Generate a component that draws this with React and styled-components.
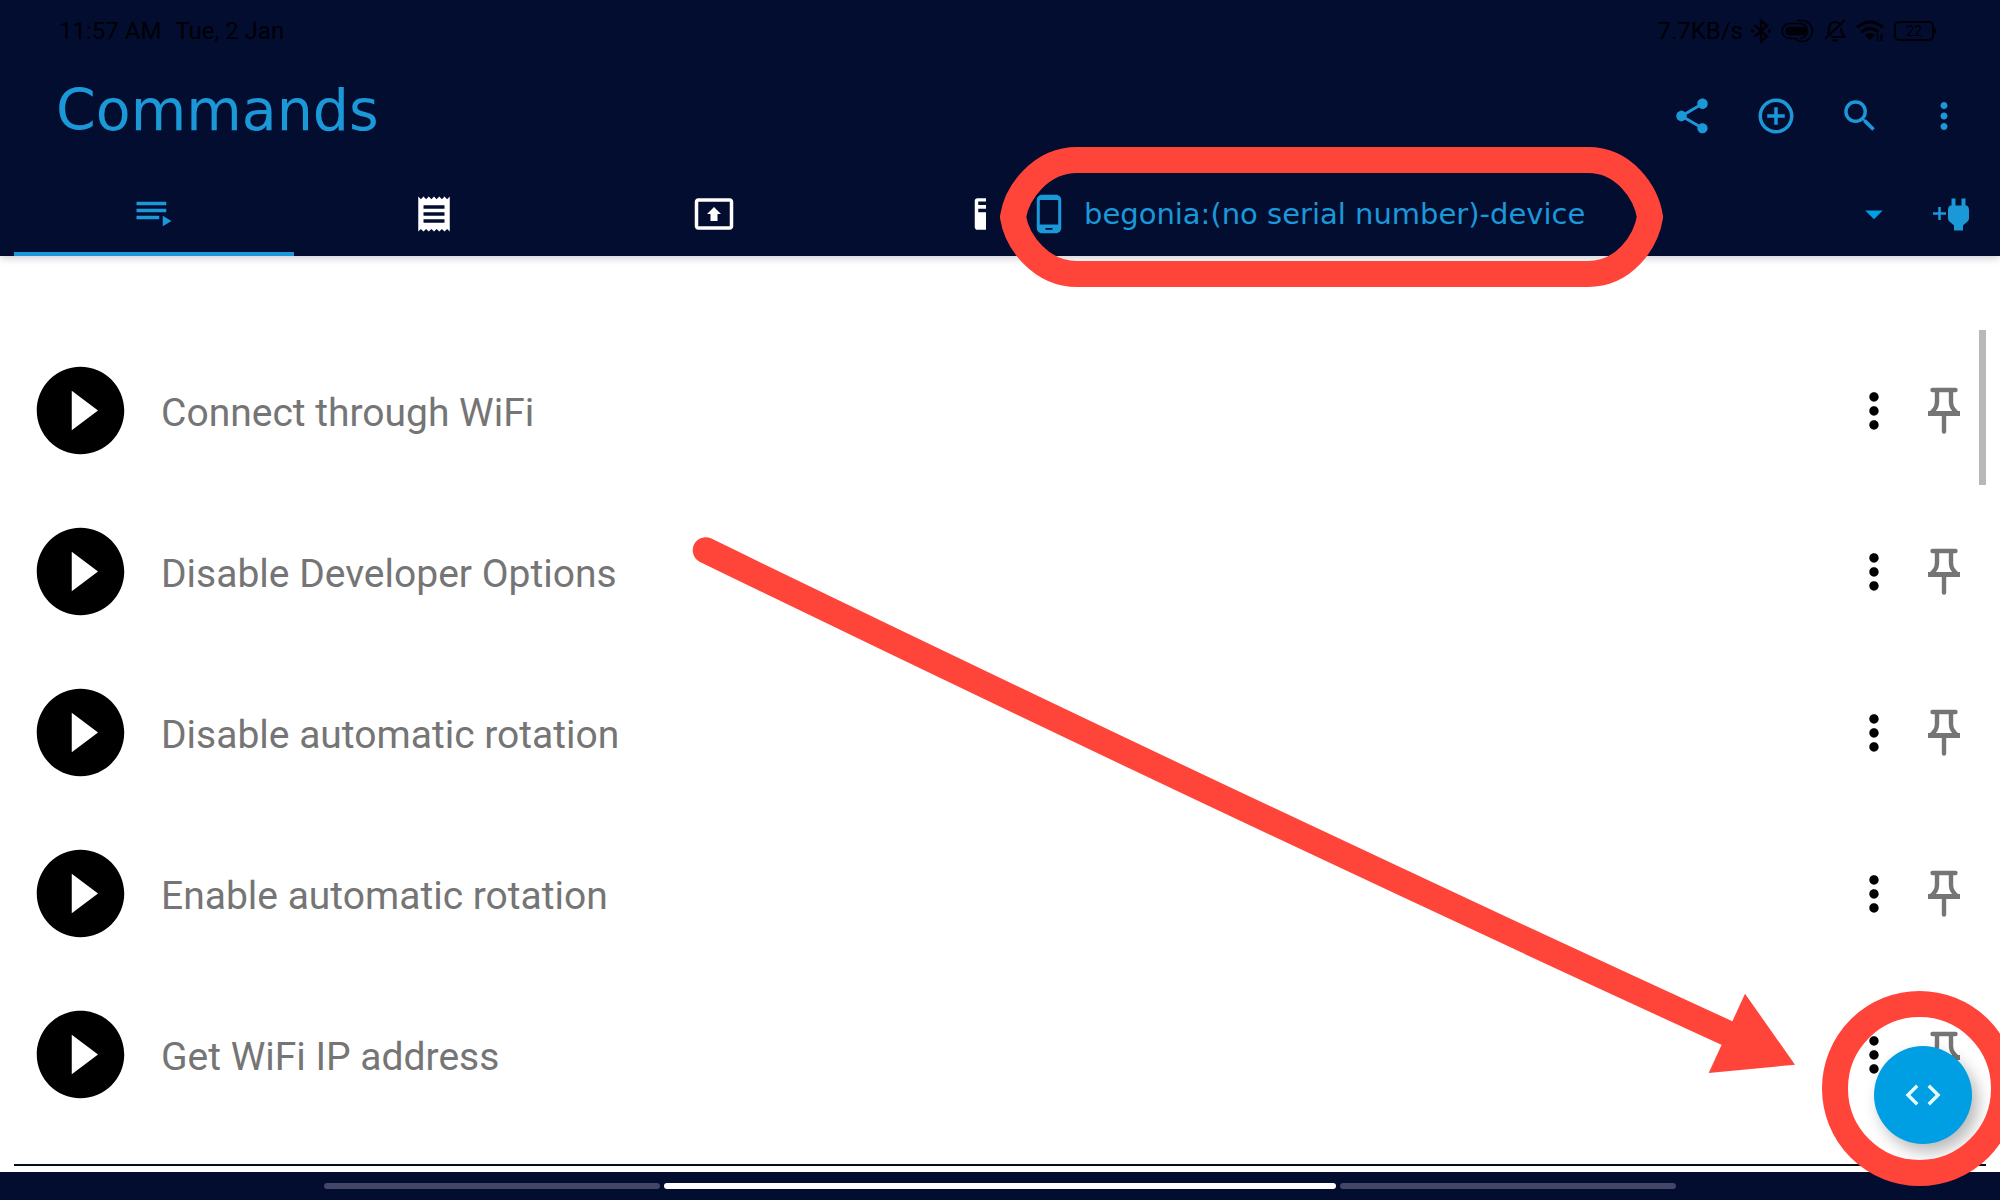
import React, { useState } from "react";
import styled, { createGlobalStyle } from "styled-components";
import {
  MdShare,
  MdAddCircleOutline,
  MdSearch,
  MdMoreVert,
  MdPhoneAndroid,
  MdArrowDropDown,
  MdPlayCircleFilled,
  MdCode,
} from "react-icons/md";

const color = {
  navy: "#030d30",
  accent: "#1b98d8",
  fab: "#009ee3",
  label: "#757575",
  marker: "#ff453a",
};

const displayFont = `"DejaVu Sans", sans-serif`;

const GlobalStyle = createGlobalStyle`
  *, *::before, *::after { box-sizing: border-box; }
  body { margin: 0; background: #fff; font-family: Roboto, sans-serif; }
  button, select { font: inherit; color: inherit; background: none; border: 0; padding: 0; margin: 0; cursor: pointer; }
  svg { display: block; flex: none; }
`;

const Screen = styled.div`
  position: relative;
  display: flex;
  flex-direction: column;
  height: 100vh;
  overflow: hidden;
`;

const Header = styled.header`
  position: relative;
  flex: none;
  background: ${color.navy};
  color: ${color.accent};
  box-shadow: 0 2px 8px rgba(2, 12, 47, 0.2);
`;

const StatusBar = styled.div`
  display: flex;
  justify-content: space-between;
  align-items: center;
  height: 60px;
  padding: 2px 66px 0 59px;
  color: #000006;
  font-size: 24px;
  line-height: 28px;
`;

const StatusGroup = styled.div`
  display: flex;
  align-items: center;
  gap: ${(p) => p.$gap}px;
`;

const StatusIcons = styled(StatusGroup)`
  margin-left: -2px;
`;

const AppBar = styled.div`
  display: flex;
  justify-content: space-between;
  height: 112px;
  padding: 0 14px 0 56px;
`;

const Title = styled.h1`
  margin: 0;
  font: 400 57px/100px ${displayFont};
`;

const Actions = styled.div`
  display: flex;
`;

const ActionButton = styled.button`
  display: grid;
  place-items: center;
  width: 84px;
`;

const TabRow = styled.div`
  display: grid;
  grid-template-columns: 1fr 1fr;
  height: 84px;
`;

const Tabs = styled.div`
  display: flex;
  margin: 0 14px;
  overflow: hidden;
`;

const Tab = styled.button`
  display: grid;
  place-items: center;
  flex: 0 0 280px;
  padding-top: 4px;
  color: ${(p) => (p.$active ? color.accent : "#fff")};
  border-bottom: 4px solid ${(p) => (p.$active ? color.accent : "transparent")};
`;

const DevicePicker = styled.div`
  position: relative;
  display: flex;
  align-items: center;
  gap: 14px;
  padding: 0 28px;
`;

const DeviceSelect = styled.select`
  flex: 1;
  min-width: 0;
  height: 56px;
  appearance: none;
  font-family: ${displayFont};
  font-size: 29px;
  outline: none;
`;

const PlugButton = styled.button`
  margin-left: 21px;
`;

const Capsule = styled.svg`
  position: absolute;
  left: 0;
  top: -26px;
  pointer-events: none;
`;

const Main = styled.main`
  position: relative;
  flex: 1;
  min-height: 0;
  display: flex;
  flex-direction: column;
  padding: 74px 0 6px;
`;

const CommandList = styled.ul`
  flex: 1;
  min-height: 0;
  overflow: hidden;
  margin: 0 14px;
  padding: 0;
  list-style: none;
  border-bottom: 2px solid #060c1e;
`;

const CommandRow = styled.li`
  display: flex;
  align-items: center;
  gap: 14px;
  height: 161px;
  padding: 0 14px;
`;

const CommandName = styled.span`
  flex: 1;
  padding: 4px 0 0 14px;
  color: ${color.label};
  font-size: 39px;
  line-height: 46px;
`;

const RowButton = styled.button`
  color: ${(p) => p.$tone || "#000"};
`;

const ScrollThumb = styled.div`
  position: absolute;
  top: 74px;
  right: 14px;
  width: 7px;
  height: 155px;
  background: #b8b8b8;
`;

const Fab = styled.button`
  position: absolute;
  right: 28px;
  bottom: 28px;
  display: grid;
  place-items: center;
  width: 98px;
  height: 98px;
  border-radius: 50%;
  background: ${color.fab};
  color: #e2fcff;
  box-shadow: 6px 8px 16px rgba(0, 0, 0, 0.28);
`;

const Ring = styled.div`
  position: absolute;
  z-index: 2;
  right: -17px;
  bottom: -14px;
  width: 195px;
  height: 195px;
  border: 26px solid ${color.marker};
  border-radius: 50%;
  pointer-events: none;
`;

const Arrow = styled.svg`
  position: absolute;
  left: 680px;
  top: 270px;
  pointer-events: none;
`;

const NavBar = styled.footer`
  display: flex;
  flex: none;
  justify-content: center;
  gap: 4px;
  height: 28px;
  padding-top: 11px;
  background: ${color.navy};
`;

const NavSegment = styled.span`
  width: ${(p) => (p.$current ? 672 : 336)}px;
  height: 6px;
  border-radius: 3px;
  background: ${(p) => (p.$current ? "#fff" : "#434666")};
`;

const QueueIcon = () => (
  <svg width="42" height="42" viewBox="0 0 24 24" fill="currentColor">
    <path d="M19 9H2v2h17V9zm0-4H2v2h17V5zM2 15h13v-2H2v2zm15-2v6l5-3-5-3z" />
  </svg>
);

const ReceiptIcon = () => (
  <svg width="42" height="42" viewBox="0 0 24 24" fill="currentColor">
    <path d="M18 17H6v-2h12v2zm0-4H6v-2h12v2zm0-4H6V7h12v2zM3 22l1.5-1.5L6 22l1.5-1.5L9 22l1.5-1.5L12 22l1.5-1.5L15 22l1.5-1.5L18 22l1.5-1.5L21 22V2l-1.500 1.500L18 2l-1.500 1.500L15 2l-1.500 1.500L12 2l-1.500 1.500L9 2 7.500 3.500 6 2 4.500 3.500 3 2v20z" />
  </svg>
);

const PresentIcon = () => (
  <svg width="42" height="42" viewBox="0 0 24 24" fill="currentColor">
    <path d="M21 3H3c-1.110 0-2 .890-2 2v14c0 1.110.890 2 2 2h18c1.110 0 2-.890 2-2V5c0-1.110-.890-2-2-2zm0 16.020H3V4.980h18v14.040zM10 12H8l4-4 4 4h-2v4h-4v-4z" />
  </svg>
);

const PackageIcon = () => (
  <svg width="42" height="42" viewBox="0 0 24 24" fill="currentColor" fillRule="evenodd">
    <path d="M2.500 3h19c.8 0 1.500.7 1.500 1.500v15c0 .8-.7 1.500-1.500 1.500h-19c-.8 0-1.500-.7-1.500-1.500v-15C1 3.700 1.700 3 2.500 3zM3 4.800v2h18v-2zM3 9v2h18V9z" />
  </svg>
);

const PlugIcon = () => (
  <svg width="42" height="42" viewBox="0 0 42 42" fill="currentColor">
    <path d="M3 20.500h13M9.500 14v13" stroke="currentColor" strokeWidth="2.500" />
    <path d="M21.500 5.500h4v7h6v-7h4v7h1.500q2 1.500 2 4v9q0 2-2 3.500l-4 3.500v5h-9v-5l-4-3.500q-2-1.500-2-3.500v-9q0-2.500 2-4h1.500z" />
  </svg>
);

const PinIcon = () => (
  <svg width="56" height="56" viewBox="0 0 56 56" fill="none" stroke="currentColor" strokeWidth="4.400">
    <path d="M16.500 7h23" strokeLinecap="round" />
    <path d="M21 7v12q0 7-7 11.500M35 7v12q0 7 7 11.500" />
    <path d="M12 30.500h32" strokeWidth="5" />
    <path d="M28 31v17.500" strokeLinecap="round" />
  </svg>
);

const BluetoothIcon = () => (
  <svg width="20" height="24" viewBox="0 0 20 24" fill="none" stroke="currentColor" strokeWidth="2.400">
    <path d="M4 6.500l12 11-6 5v-21l6 5-12 11" />
    <path d="M0 12h3M17 12h3" strokeWidth="3" />
  </svg>
);

const BudsIcon = () => (
  <svg width="33" height="24" viewBox="0 0 33 24" fill="none" stroke="currentColor" strokeWidth="1.600">
    <rect x="5" y="8.500" width="20" height="7" rx="3.500" fill="currentColor" />
    <path d="M20 4.500H8.500a7.500 7.500 0 0 0 0 15H16" />
    <path d="M16 1.500h5a10.500 10.500 0 0 1 0 21q-4 0-6-2.500" />
    <path d="M19 4.500a7.500 7.500 0 0 1 0 15" />
  </svg>
);

const MutedBellIcon = () => (
  <svg width="22" height="24" viewBox="0 0 22 24" fill="none" stroke="currentColor" strokeWidth="2">
    <path d="M4 15q1-2 1-6 1-6 6-6 3 0 4.500 2M17 9q0 5 3.500 9H7M21 1L1 20M8 21.500h6" />
  </svg>
);

const WifiIcon = () => (
  <svg width="28" height="24" viewBox="0 0 28 24" fill="none" stroke="currentColor" strokeWidth="3">
    <path d="M1 8.500q13-11 26 0M5.500 13q8.500-7 17 0" />
    <path d="M9 16q5-4 10 0l-5 5z" fill="currentColor" stroke="none" />
    <path d="M21.500 22v-7m4 0v7" strokeWidth="2" />
  </svg>
);

const Battery = styled.span`
  display: grid;
  place-items: center;
  position: relative;
  width: 40px;
  height: 20px;
  border: 2px solid currentColor;
  border-radius: 5px;
  font-size: 14px;
  line-height: 16px;

  &::after {
    content: "";
    position: absolute;
    left: 37px;
    width: 3px;
    height: 6px;
    border-radius: 0 3px 3px 0;
    background: currentColor;
  }
`;

const tabs = [
  { name: "Commands", Icon: QueueIcon },
  { name: "Logs", Icon: ReceiptIcon },
  { name: "Install", Icon: PresentIcon },
  { name: "Packages", Icon: PackageIcon },
];

const actions = [
  { name: "Share", Icon: MdShare },
  { name: "Add", Icon: MdAddCircleOutline },
  { name: "Search", Icon: MdSearch },
  { name: "More", Icon: MdMoreVert },
];

const commands = [
  "Connect through WiFi",
  "Disable Developer Options",
  "Disable automatic rotation",
  "Enable automatic rotation",
  "Get WiFi IP address",
];

export default function App() {
  const [active, setActive] = useState(0);

  return (
    <Screen>
      <GlobalStyle />
      <Header>
        <StatusBar>
          <StatusGroup $gap={14}>
            <span>11:57 AM</span>
            <span>Tue, 2 Jan</span>
          </StatusGroup>
          <StatusGroup $gap={10}>
            <span>7.7KB/s</span>
            <StatusIcons $gap={10}>
              <BluetoothIcon />
              <BudsIcon />
              <MutedBellIcon />
              <WifiIcon />
              <Battery>22</Battery>
            </StatusIcons>
          </StatusGroup>
        </StatusBar>
        <AppBar>
          <Title>Commands</Title>
          <Actions>
            {actions.map(({ name, Icon }) => (
              <ActionButton key={name} aria-label={name}>
                <Icon size={42} />
              </ActionButton>
            ))}
          </Actions>
        </AppBar>
        <TabRow>
          <Tabs role="tablist">
            {tabs.map(({ name, Icon }, i) => (
              <Tab
                key={name}
                role="tab"
                aria-label={name}
                aria-selected={i === active}
                $active={i === active}
                onClick={() => setActive(i)}
              >
                <Icon />
              </Tab>
            ))}
          </Tabs>
          <DevicePicker>
            <MdPhoneAndroid size={42} />
            <DeviceSelect aria-label="Device">
              <option>begonia:(no serial number)-device</option>
            </DeviceSelect>
            <MdArrowDropDown size={42} color={color.fab} />
            <PlugButton aria-label="Connect device">
              <PlugIcon />
            </PlugButton>
            <Capsule width="664" height="142" fill="none" stroke={color.marker} strokeWidth="26">
              <path d="M77 14H588C624 14 646 46 650 71C646 96 624 128 588 128H77C41 128 17 96 13 71C17 46 41 14 77 14Z" />
            </Capsule>
          </DevicePicker>
        </TabRow>
      </Header>
      <Main>
        <CommandList>
          {commands.map((name) => (
            <CommandRow key={name}>
              <RowButton aria-label={`Run ${name}`}>
                <MdPlayCircleFilled size={105} />
              </RowButton>
              <CommandName>{name}</CommandName>
              <RowButton aria-label={`Options for ${name}`}>
                <MdMoreVert size={56} />
              </RowButton>
              <RowButton aria-label={`Pin ${name}`} $tone={color.label}>
                <PinIcon />
              </RowButton>
            </CommandRow>
          ))}
        </CommandList>
        <ScrollThumb />
        <Arrow width="1130" height="560" viewBox="680 526 1130 560">
          <path d="M705.700 550.300Q1216 798.500 1729 1034" fill="none" stroke={color.marker} strokeWidth="26" strokeLinecap="round" />
          <path d="M1745 993.700L1795 1064.700L1708.700 1073Z" fill={color.marker} />
        </Arrow>
        <Fab aria-label="Run code">
          <MdCode size={42} />
        </Fab>
        <Ring />
      </Main>
      <NavBar>
        <NavSegment />
        <NavSegment $current />
        <NavSegment />
      </NavBar>
    </Screen>
  );
}
